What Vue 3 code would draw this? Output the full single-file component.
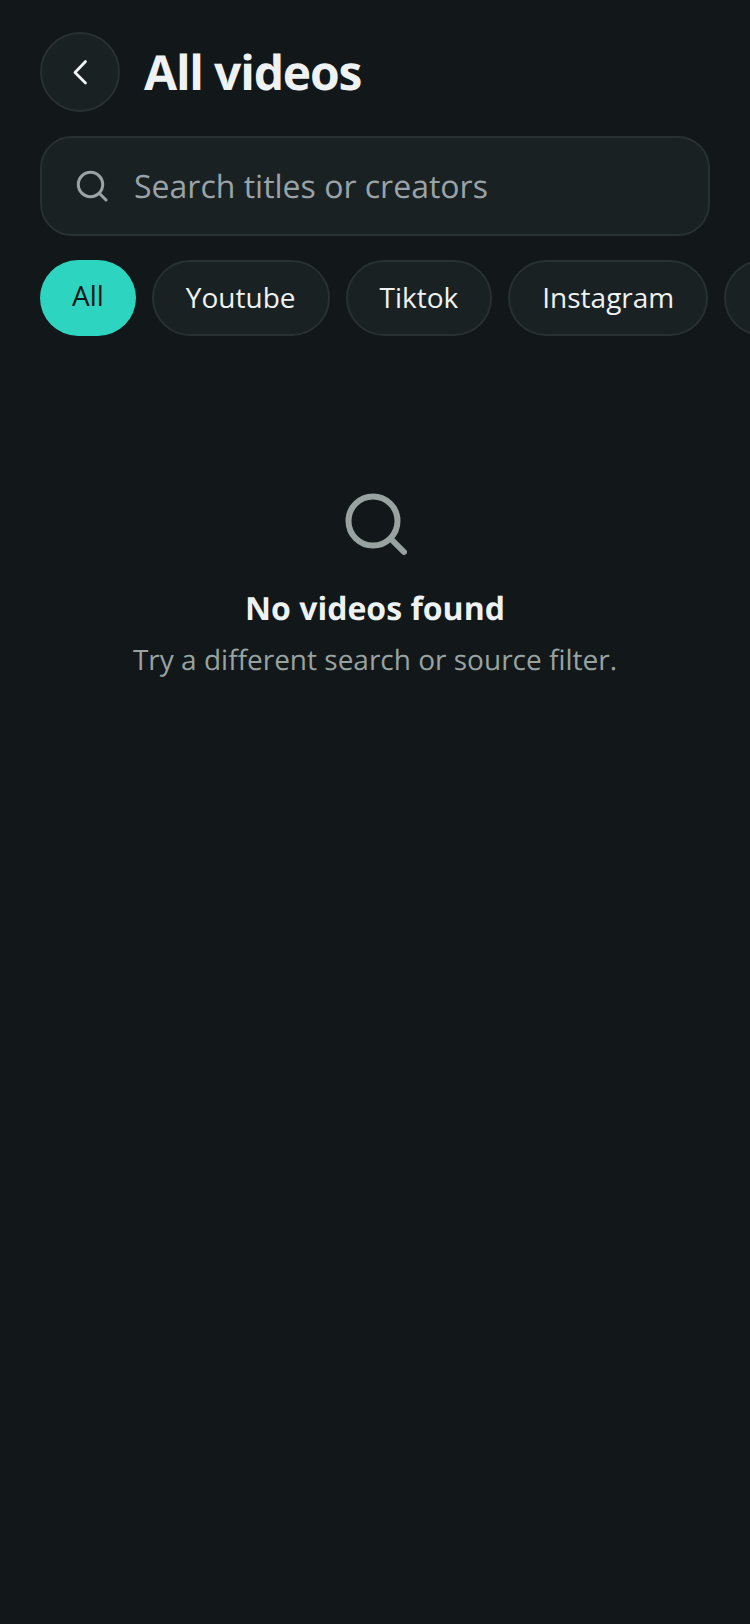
<template>
  <div class="page">
    <header class="top">
      <button class="back" type="button" aria-label="Back">
        <svg width="24" height="28" viewBox="0 0 24 28" fill="none">
          <path d="M17.5 3.5 L7 14.5 L17.5 25" stroke="#f0f3f4" stroke-width="2.8" stroke-linecap="round" stroke-linejoin="round"/>
        </svg>
      </button>
      <h1 class="title">All videos</h1>
    </header>

    <div class="search">
      <svg class="search-icon" width="32" height="32" viewBox="0 0 32 32" fill="none">
        <circle cx="14.5" cy="14.5" r="12.2" stroke="#9aa3a5" stroke-width="3"/>
        <path d="M23.5 23.5 L30 30" stroke="#9aa3a5" stroke-width="3" stroke-linecap="round"/>
      </svg>
      <span class="placeholder">Search titles or creators</span>
    </div>

    <div class="chips">
      <button
        v-for="(chip, i) in chips"
        :key="chip"
        class="chip"
        :class="{ active: i === 0 }"
        type="button"
      >{{ chip }}</button>
      <span class="chip chip-next"></span>
    </div>

    <section class="empty">
      <svg class="empty-icon" width="64" height="64" viewBox="0 0 64 64" fill="none">
        <circle cx="30" cy="29" r="24.5" stroke="#98a3a1" stroke-width="6"/>
        <path d="M48 47 L61 60" stroke="#98a3a1" stroke-width="6" stroke-linecap="round"/>
      </svg>
      <h2 class="empty-title">No videos found</h2>
      <p class="empty-text">Try a different search or source filter.</p>
    </section>
  </div>
</template>

<script setup>
const chips = ['All', 'Youtube', 'Tiktok', 'Instagram']
</script>

<style>
body {
  background: #121719;
}
</style>

<style scoped>
.page {
  width: 750px;
  height: 1624px;
  overflow: hidden;
  background: #121719;
  font-family: "Open Sans", sans-serif;
  text-rendering: geometricPrecision;
  padding: 32px 40px 0;
  box-sizing: border-box;
}

.top {
  display: flex;
  align-items: center;
  gap: 24px;
  height: 80px;
}

.back {
  width: 80px;
  height: 80px;
  flex: none;
  display: flex;
  align-items: center;
  justify-content: center;
  padding: 0;
  background: #1a2122;
  border: 2px solid #283031;
  border-radius: 50%;
}

.title {
  margin: 2px 0 0;
  font-size: 48px;
  line-height: 64px;
  font-weight: 700;
  letter-spacing: -1.2px;
  color: #eef2f3;
}

.search {
  height: 100px;
  margin-top: 24px;
  width: 670px;
  box-sizing: border-box;
  display: flex;
  align-items: center;
  gap: 26px;
  padding: 0 34px;
  background: #1a2122;
  border: 2px solid #283031;
  border-radius: 32px;
}

.search-icon {
  flex: none;
}

.placeholder {
  font-size: 32px;
  color: #9aa3a8;
}

.chips {
  display: flex;
  gap: 16px;
  margin-top: 24px;
  width: 800px;
}

.chip {
  height: 76px;
  flex: none;
  box-sizing: border-box;
  padding: 0 32px 2px;
  font-family: inherit;
  font-size: 28px;
  color: #eef2f3;
  background: #1a2122;
  border: 2px solid #283031;
  border-radius: 38px;
}

.chip.active {
  background: #2dd4bf;
  border: none;
  color: #121719;
  padding-bottom: 6px;
}

.chip-next {
  width: 120px;
}

.empty {
  display: flex;
  flex-direction: column;
  align-items: center;
  margin-top: 156px;
}

.empty-title {
  margin: 31px 0 0;
  font-size: 32px;
  line-height: 44px;
  font-weight: 700;
  color: #eef2f3;
}

.empty-text {
  margin: 7px 0 0;
  font-size: 28px;
  line-height: 44px;
  color: #98a3a1;
}
</style>
